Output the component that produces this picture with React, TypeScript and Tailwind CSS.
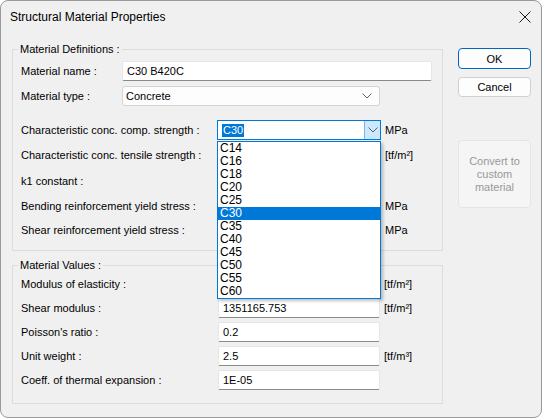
import React from 'react';

const grades = ['C14', 'C16', 'C18', 'C20', 'C25', 'C30', 'C35', 'C40', 'C45', 'C50', 'C55', 'C60'];

function Chevron() {
  return (
    <svg width="10" height="6" viewBox="0 0 10 6">
      <path d="M0.5 0.5 L5 5 L9.5 0.5" fill="none" stroke="#5f5f5f" strokeWidth="1" />
    </svg>
  );
}

function TextBox({ value, className = '' }: { value: string; className?: string }) {
  return (
    <div
      className={`h-[20px] flex items-center bg-white border border-[#e6e6e6] border-b-[#8a8a8a] rounded-[2px] px-[4px] text-black whitespace-nowrap ${className}`}
    >
      {value}
    </div>
  );
}

function Row({
  label,
  labelW,
  mt,
  children,
}: {
  label: string;
  labelW: string;
  mt: string;
  children?: React.ReactNode;
}) {
  return (
    <div className={`flex items-center h-[20px] ${mt}`}>
      <div className={`${labelW} shrink-0 leading-[16px] whitespace-nowrap`}>{label}</div>
      {children}
    </div>
  );
}

function Unit({ children }: { children: React.ReactNode }) {
  return <span className="ml-[4px] leading-[16px] whitespace-nowrap">{children}</span>;
}

export default function App() {
  return (
    <div className="w-[542px] h-[419px] bg-white text-[11px] text-black [font-family:'Liberation_Sans',Arial,sans-serif]">
      <div className="h-[418px] rounded-[8px] border border-[#9a9a9a] bg-[#f0f0f0] flex flex-col overflow-hidden">
        {/* Title bar */}
        <div className="h-[31px] shrink-0 flex items-center justify-between pl-[9px] pr-[10px]">
          <span className="text-[12px] leading-[16px]">Structural Material Properties</span>
          <svg width="12" height="12" viewBox="0 0 12 12">
            <path d="M0.5 0.5 L11.5 11.5 M11.5 0.5 L0.5 11.5" stroke="#1a1a1a" strokeWidth="1" />
          </svg>
        </div>

        <div className="flex pl-[11px]">
          {/* Left column: group boxes */}
          <div className="w-[431px] shrink-0 flex flex-col">
            <fieldset className="mt-[9px] border border-[#dcdcdc] pl-[8px] pb-[10px]">
              <legend className="ml-[-3px] px-[2px] leading-[16px]">Material Definitions :</legend>
              <Row label="Material name :" labelW="w-[101px]" mt="mt-[4px]">
                <TextBox value="C30 B420C" className="w-[310px]" />
              </Row>
              <Row label="Material type :" labelW="w-[101px]" mt="mt-[5px]">
                <div className="w-[258px] h-[20px] flex items-center justify-between bg-[#fdfdfd] border border-[#d4d4d4] rounded-[3px] pl-[3px] pr-[7px]">
                  <span className="leading-[16px]">Concrete</span>
                  <Chevron />
                </div>
              </Row>
              <Row label="Characteristic conc. comp. strength :" labelW="w-[196px]" mt="mt-[14px]">
                <div className="relative w-[164px] h-[20px] flex bg-white border border-[#0078d7]">
                  <div className="flex-1 flex items-center pl-[4px]">
                    <span className="bg-[#0078d7] text-white px-[1px] leading-[13px]">C30</span>
                  </div>
                  <div className="w-[16px] flex items-center justify-center bg-[#cce8ff] border-l border-[#7eb4ea]">
                    <Chevron />
                  </div>
                  {/* Open dropdown list */}
                  <div className="absolute left-[-1px] top-[20px] w-[164px] z-10 bg-white border border-[#0078d7] shadow-[2px_2px_3px_rgba(0,0,0,0.25)]">
                    {grades.map((g) => (
                      <div
                        key={g}
                        className={`h-[13px] leading-[13px] pl-[2px] text-[12px] ${g === 'C30' ? 'bg-[#0078d7] text-white' : 'text-black'}`}
                      >
                        {g}
                      </div>
                    ))}
                  </div>
                </div>
                <Unit>MPa</Unit>
              </Row>
              <Row label="Characteristic conc. tensile strength :" labelW="w-[196px]" mt="mt-[5px]">
                <div className="w-[164px]" />
                <Unit>[tf/m²]</Unit>
              </Row>
              <Row label="k1 constant :" labelW="w-[196px]" mt="mt-[6px]" />
              <Row label="Bending reinforcement yield stress :" labelW="w-[196px]" mt="mt-[5px]">
                <div className="w-[164px]" />
                <Unit>MPa</Unit>
              </Row>
              <Row label="Shear reinforcement yield stress :" labelW="w-[196px]" mt="mt-[4px]">
                <div className="w-[164px]" />
                <Unit>MPa</Unit>
              </Row>
            </fieldset>

            <fieldset className="mt-[6px] border border-[#dcdcdc] pl-[8px] pb-[13px]">
              <legend className="ml-[-3px] px-[2px] leading-[16px]">Material Values :</legend>
              <Row label="Modulus of elasticity :" labelW="w-[197px]" mt="mt-[1px]">
                <TextBox value="" className="w-[162px]" />
                <Unit>[tf/m²]</Unit>
              </Row>
              <Row label="Shear modulus :" labelW="w-[197px]" mt="mt-[4px]">
                <TextBox value="1351165.753" className="w-[162px]" />
                <Unit>[tf/m²]</Unit>
              </Row>
              <Row label="Poisson's ratio :" labelW="w-[197px]" mt="mt-[4px]">
                <TextBox value="0.2" className="w-[162px]" />
              </Row>
              <Row label="Unit weight :" labelW="w-[197px]" mt="mt-[4px]">
                <TextBox value="2.5" className="w-[162px]" />
                <Unit>[tf/m³]</Unit>
              </Row>
              <Row label="Coeff. of thermal expansion :" labelW="w-[197px]" mt="mt-[4px]">
                <TextBox value="1E-05" className="w-[162px]" />
              </Row>
            </fieldset>
          </div>

          {/* Right column: buttons */}
          <div className="ml-[15px] w-[73px] flex flex-col">
            <button className="mt-[16px] h-[21px] rounded-[4px] border border-[#0067c0] bg-[#fdfdfd] leading-[16px]">
              OK
            </button>
            <button className="mt-[8px] h-[20px] rounded-[4px] border border-[#d0d0d0] bg-[#fdfdfd] leading-[16px]">
              Cancel
            </button>
            <button className="mt-[43px] h-[68px] rounded-[4px] border border-[#e5e5e5] bg-[#f5f5f5] text-[#999999] leading-[13px] px-[4px]">
              Convert to custom material
            </button>
          </div>
        </div>
      </div>
    </div>
  );
}
